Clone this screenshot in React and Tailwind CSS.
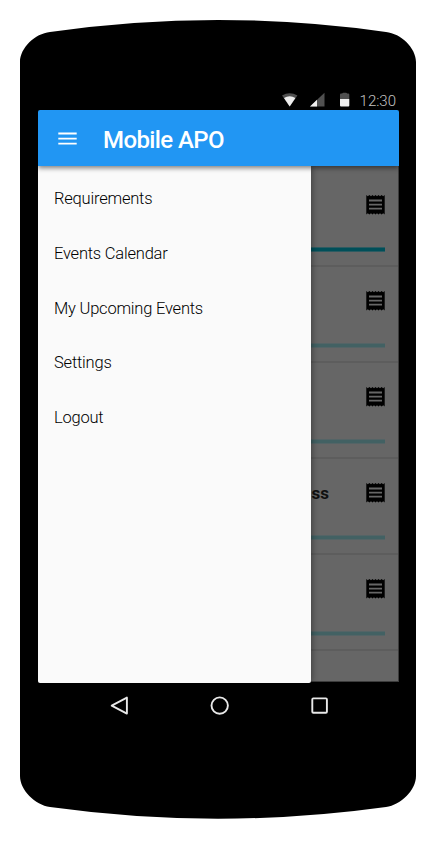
import React from "react";

const menuItems = [
  "Requirements",
  "Events Calendar",
  "My Upcoming Events",
  "Settings",
  "Logout",
];

const rows = [
  { label: "", done: true },
  { label: "", done: false },
  { label: "", done: false },
  { label: "ss", done: false },
  { label: "", done: false },
];

function ReceiptIcon() {
  return (
    <svg width="19" height="20" viewBox="0 0 19 20" className="shrink-0">
      <path d="M.3 0L1.8 1.2L3.4 0L5 1.2L6.5 0L8 1.2L9.5 0L11 1.2L12.5 0L14 1.2L15.6 0L17.2 1.2L18.7 0V19.4L17.2 18.2L15.6 19.4L14 18.2L12.5 19.4L11 18.2L9.5 19.4L8 18.2L6.5 19.4L5 18.2L3.4 19.4L1.8 18.2L.3 19.4Z" />
      <path d="M3 4.6h13v1.8H3zM3 8.7h13v1.8H3zM3 12.7h13v1.8H3z" fill="#666" />
    </svg>
  );
}

function PhoneBody() {
  return (
    <svg width="436" height="843" viewBox="0 0 436 843" className="absolute inset-0">
      <path d="M20 62C20 48 35 33.5 50 32Q134 20 218 20Q302 20 386 32C401 33.5 416 48 416 62V776C416 790 401 805 386 807Q302 818.7 218 818.7Q134 818.7 50 807C35 805 20 790 20 776Z" />
    </svg>
  );
}

function StatusBar() {
  return (
    <div className="flex h-[20px] items-center justify-end pr-[3px]">
      <svg width="76" height="20" viewBox="0 0 76 20" className="mr-[3px]">
        {/* Wifi */}
        <path d="M1 5.5Q8.7 .8 16.4 5.5L8.7 16.5Z" fill="#505050" />
        <path d="M3 8Q8.7 4.6 14.4 8L8.7 16.5Z" fill="#eee" />
        {/* Signal */}
        <path d="M29 16.5L43.5 2.7V16.5Z" fill="#505050" />
        <path d="M29 16.5L36 9.8V16.5Z" fill="#eee" />
        {/* Battery */}
        <path d="M59 9V4.6Q59 3.6 60 3.6H61.3Q61.3 2.7 62.3 2.7H65Q66 2.7 66 3.6H67.3Q68.3 3.6 68.3 4.6V9Z" fill="#505050" />
        <path d="M59 9H68.3V15.6Q68.3 16.6 67.3 16.6H60Q59 16.6 59 15.6Z" fill="#eee" />
      </svg>
      <span className="pt-px text-[15px] leading-5 font-light text-[#c4c4c4]">12:30</span>
    </div>
  );
}

function AppBar() {
  return (
    <header className="relative z-20 flex h-14 items-center rounded-t-[2px] bg-[#2196f3] pl-[20px] text-white shadow-[0_2px_5px_rgba(0,0,0,0.5)]">
      <svg width="19" height="14" viewBox="0 0 19 14" className="fill-white">
        <path d="M.3 1.6h18.4v1.9H.3zM.3 6.7h18.4v1.9H.3zM.3 11.7h18.4v1.9H.3z" />
      </svg>
      <h1 className="ml-[26px] pt-[4px] text-[24px] leading-7 font-medium tracking-[-0.6px]">Mobile APO</h1>
    </header>
  );
}

function Drawer() {
  return (
    <nav className="absolute top-0 left-0 z-10 h-[517px] w-[273px] rounded-b-[2px] bg-[#fafafa] pt-[6px] shadow-[1px_0_6px_rgba(0,0,0,0.4)]">
      {menuItems.map((item) => (
        <div
          key={item}
          className="flex h-[54.75px] items-center pl-4 text-[16.5px] font-light tracking-[-0.21px] text-black"
        >
          {item}
        </div>
      ))}
    </nav>
  );
}

function RequirementList() {
  return (
    <div className="h-[516px] w-[361px] overflow-hidden border-r border-b border-[#3c3c3c] bg-[#666] pt-[5px]">
      {rows.map((row, i) => (
        <div key={i} className="flex h-24 flex-col border-b-2 border-[#5d5d5d] pr-[13px]">
          <div className="mt-[23px] flex h-[21px] items-center justify-end">
            <span className="mr-[37px] pt-[3px] text-[17px] font-bold text-[#111]">{row.label}</span>
            <ReceiptIcon />
          </div>
          <div
            className={
              row.done
                ? "mt-[32px] h-[5px] border-y border-[#2d5b61] bg-[#004f59]"
                : "mt-[32px] h-[5px] border-y border-[#546466] bg-[#426163]"
            }
          />
        </div>
      ))}
    </div>
  );
}

function NavButtons() {
  return (
    <div className="flex h-[45px] items-center justify-center gap-[80px] pl-[2px]">
      <svg width="20" height="20" viewBox="0 0 20 20" fill="none" stroke="#e8e8e8" strokeWidth="1.9" strokeLinejoin="round">
        <path d="M16.9 1.6V17.6L1.7 9.6Z" />
      </svg>
      <svg width="20" height="20" viewBox="0 0 20 20" fill="none" stroke="#e8e8e8" strokeWidth="1.9">
        <circle cx="9.7" cy="9.6" r="8.2" />
      </svg>
      <svg width="20" height="20" viewBox="0 0 20 20" fill="none" stroke="#e8e8e8" strokeWidth="1.9">
        <rect x="2.3" y="2.4" width="14.6" height="14.4" rx="1" />
      </svg>
    </div>
  );
}

export default function App() {
  return (
    <div className="relative h-[843px] w-[436px] overflow-hidden bg-white font-[Roboto,sans-serif]">
      <PhoneBody />
      <div className="relative ml-[38px] w-[361px] pt-[90px]">
        <StatusBar />
        <AppBar />
        <main className="relative h-[517px]">
          <RequirementList />
          <Drawer />
        </main>
        <NavButtons />
      </div>
    </div>
  );
}
